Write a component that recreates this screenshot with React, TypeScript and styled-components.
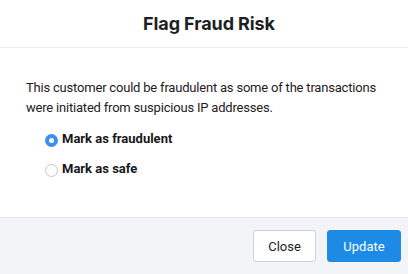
import React, { useState } from "react";
import styled, { createGlobalStyle } from "styled-components";

const Global = createGlobalStyle`
  html, body { margin: 0; padding: 0; background: #ffffff; }
  body { font-family: Roboto, "Liberation Sans", Arial, sans-serif; }
  * { box-sizing: border-box; }
`;

const Dialog = styled.div`
  width: 408px;
  height: 274px;
  display: flex;
  flex-direction: column;
  background: #ffffff;
`;

const Header = styled.div`
  height: 48px;
  flex: none;
  display: flex;
  align-items: center;
  justify-content: center;
  padding-left: 10px;
  border-bottom: 1px solid #e9ebee;
`;

const Title = styled.h1`
  margin: 0;
  font-family: Inter, "Liberation Sans", sans-serif;
  font-size: 18px;
  font-weight: 700;
  color: #1d1f24;
  letter-spacing: -0.1px;
`;

const Body = styled.div`
  flex: 1;
  padding: 30px 14px 0 26px;
`;

const Message = styled.p`
  margin: 0;
  font-size: 13px;
  line-height: 20px;
  letter-spacing: -0.2px;
  color: #1f2023;
`;

const Options = styled.div`
  display: flex;
  flex-direction: column;
  gap: 10px;
  margin: 11px 0 0 19px;
`;

const Option = styled.label`
  display: flex;
  align-items: center;
  gap: 4px;
  font-size: 13px;
  line-height: 20px;
  font-weight: 700;
  color: #16171a;
  cursor: pointer;
`;

const RadioDot = styled.span<{ $checked: boolean }>`
  width: 13px;
  height: 13px;
  margin-top: 2px;
  border-radius: 50%;
  flex: none;
  background: ${(p) => (p.$checked ? "#3a8ff0" : "#ffffff")};
  border: ${(p) => (p.$checked ? "none" : "1px solid #c4c6ca")};
  display: flex;
  align-items: center;
  justify-content: center;
  &::after {
    content: "";
    width: 5px;
    height: 5px;
    border-radius: 50%;
    background: #ffffff;
    display: ${(p) => (p.$checked ? "block" : "none")};
  }
`;

const Footer = styled.div`
  height: 57px;
  flex: none;
  background: #f2f4f7;
  border-top: 1px solid #e6e9ed;
  display: flex;
  align-items: center;
  justify-content: flex-end;
  gap: 11px;
  padding: 0 7px 0 0;
`;

const Button = styled.button<{ $primary?: boolean }>`
  height: 32px;
  width: ${(p) => (p.$primary ? "74px" : "63px")};
  padding: 0;
  border-radius: 3px;
  font-family: Roboto, "Liberation Sans", Arial, sans-serif;
  font-size: 13px;
  cursor: pointer;
  background: ${(p) => (p.$primary ? "#1d8ae6" : "#ffffff")};
  color: ${(p) => (p.$primary ? "#ffffff" : "#1b1c1f")};
  border: 1px solid ${(p) => (p.$primary ? "#1d8ae6" : "#cfd2d6")};
`;

export default function App() {
  const [choice, setChoice] = useState("fraud");
  return (
    <Dialog>
      <Global />
      <Header>
        <Title>Flag Fraud Risk</Title>
      </Header>
      <Body>
        <Message>
          This customer could be fraudulent as some of the transactions were
          initiated from suspicious IP addresses.
        </Message>
        <Options>
          <Option onClick={() => setChoice("fraud")}>
            <RadioDot $checked={choice === "fraud"} />
            Mark as fraudulent
          </Option>
          <Option onClick={() => setChoice("safe")}>
            <RadioDot $checked={choice === "safe"} />
            Mark as safe
          </Option>
        </Options>
      </Body>
      <Footer>
        <Button>Close</Button>
        <Button $primary>Update</Button>
      </Footer>
    </Dialog>
  );
}
